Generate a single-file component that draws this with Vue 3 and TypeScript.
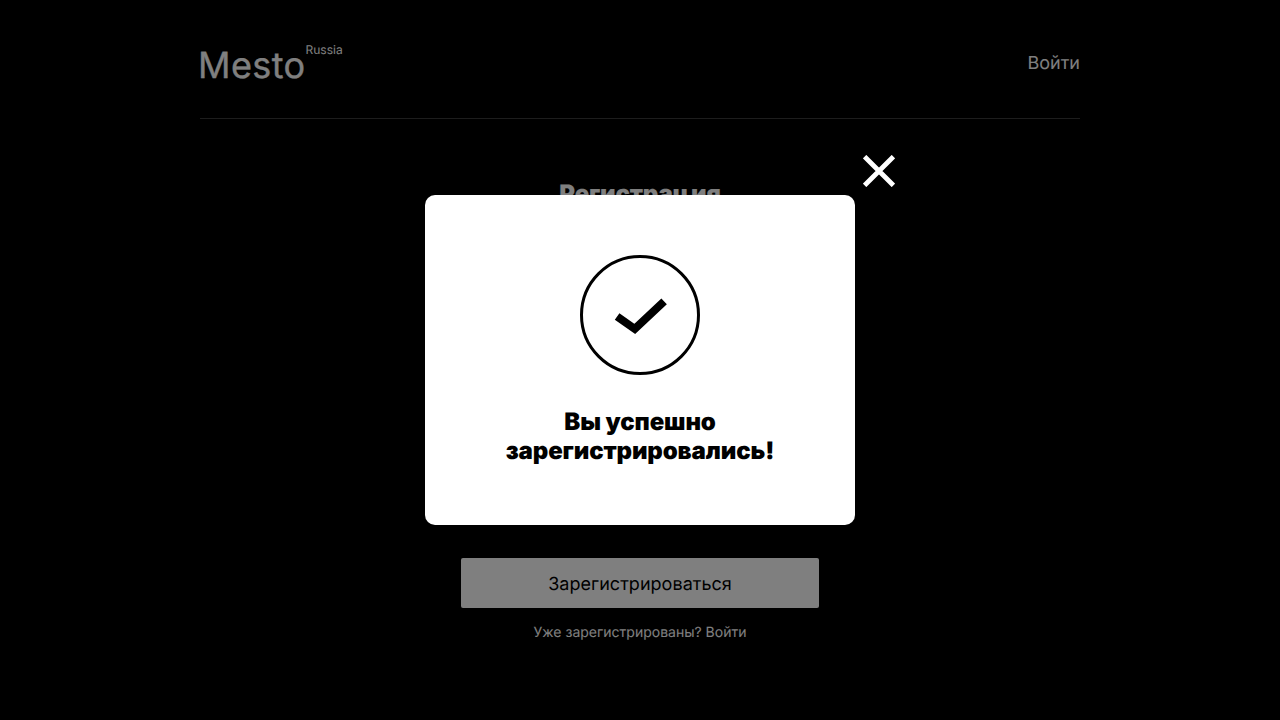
<script setup lang="ts">
import { ref } from 'vue'

const isOpen = ref<boolean>(true)
</script>

<template>
  <div class="page">
    <header class="header">
      <div class="logo"><span class="logo-name">Mesto</span><span class="logo-region">Russia</span></div>
      <a class="header-link">Войти</a>
    </header>
    <main class="auth">
      <h1 class="auth-title">Регистра<span class="wide">ц</span>ия</h1>
      <button class="auth-submit" type="button">Зарегистрироваться</button>
      <p class="auth-note">Уже зарегистрированы? Войти</p>
    </main>
    <div v-if="isOpen" class="overlay">
      <div class="popup">
        <button class="close" type="button" @click="isOpen = false">
          <svg width="32" height="32" viewBox="0 0 32 32">
            <path d="M1.6 1.6L30.4 30.4M30.4 1.6L1.6 30.4" stroke="#fff" stroke-width="4.8" />
          </svg>
        </button>
        <svg class="status" width="120" height="120" viewBox="0 0 120 120" fill="none">
          <circle cx="60" cy="60" r="58.5" stroke="#000" stroke-width="3" />
          <path d="M37.1 61.4L54.8 73.9L84.1 46.3" stroke="#000" stroke-width="8" />
        </svg>
        <p class="message">Вы успешно зарегистрировались!</p>
      </div>
    </div>
  </div>
</template>

<style>
body {
  background: #000;
}
</style>

<style scoped>
.page {
  height: 720px;
  overflow: hidden;
  background: #000;
  color: #fff;
  font-family: Inter, sans-serif;
  text-rendering: geometricPrecision;
}
.header {
  box-sizing: border-box;
  width: 880px;
  height: 119px;
  margin: 0 auto;
  padding-top: 42px;
  display: flex;
  justify-content: space-between;
  align-items: flex-start;
  border-bottom: 1px solid rgba(84, 84, 84, 0.7);
}
.logo {
  display: flex;
  align-items: flex-start;
}
.logo-name {
  width: 107.5px;
  margin-left: -2px;
  font-size: 36px;
  line-height: 46px;
  letter-spacing: 0.4px;
  -webkit-text-stroke: 0.3px currentColor;
}
.logo-region {
  font-size: 12px;
  line-height: 15px;
}
.header-link {
  margin-top: 11px;
  font-size: 18px;
  line-height: 22px;
}
.auth {
  width: 358px;
  height: 601px;
  margin: 0 auto;
  padding-top: 60px;
  box-sizing: border-box;
  display: flex;
  flex-direction: column;
  text-align: center;
}
.auth-title {
  margin: 0 0 350px;
  font-size: 24px;
  font-weight: 900;
  line-height: 29px;
  letter-spacing: -0.15px;
}
.wide {
  letter-spacing: 1.5px;
}
.auth-submit {
  height: 50px;
  padding: 3px 0 0;
  border: 0;
  border-radius: 2px;
  background: #fff;
  color: #000;
  font: 400 18px/22px Inter, sans-serif;
  letter-spacing: 0.03px;
  text-rendering: geometricPrecision;
}
.auth-note {
  margin: 16px 0 0;
  font-size: 14px;
  line-height: 17px;
}
.overlay {
  position: fixed;
  inset: 0;
  display: flex;
  justify-content: center;
  align-items: center;
  background: rgba(0, 0, 0, 0.5);
}
.popup {
  position: relative;
  box-sizing: border-box;
  width: 430px;
  height: 330px;
  padding-top: 60px;
  display: flex;
  flex-direction: column;
  align-items: center;
  border-radius: 10px;
  background: #fff;
  color: #000;
}
.close {
  position: absolute;
  top: -40px;
  right: -40px;
  width: 32px;
  height: 32px;
  padding: 0;
  border: 0;
  background: transparent;
}
.close svg,
.status {
  display: block;
}
.message {
  width: 358px;
  margin: 32px 0 0;
  font-size: 24px;
  font-weight: 900;
  line-height: 29px;
  letter-spacing: -0.12px;
  text-align: center;
}
</style>
